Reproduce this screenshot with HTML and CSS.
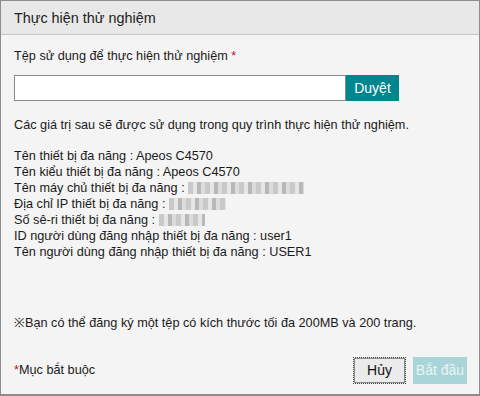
FILE: index.html
```html
<!DOCTYPE html>
<html lang="vi">
<head>
<meta charset="utf-8">
<link rel="stylesheet" href="styles.css">
</head>
<body>
<div class="dialog">
  <div class="header">Thực hiện thử nghiệm</div>
  <div class="content">
    <div class="label">Tệp sử dụng để thực hiện thử nghiệm <span class="req">*</span></div>
    <div class="file-row">
      <div class="file-input"></div>
      <button class="browse">Duyệt</button>
    </div>
    <p class="note">Các giá trị sau sẽ được sử dụng trong quy trình thực hiện thử nghiệm.</p>
    <div class="info">
      <div>Tên thiết bị đa năng : Apeos C4570</div>
      <div>Tên kiểu thiết bị đa năng : Apeos C4570</div>
      <div>Tên máy chủ thiết bị đa năng : <span class="blur b-host"></span></div>
      <div>Địa chỉ IP thiết bị đa năng : <span class="blur b-ip"></span></div>
      <div>Số sê-ri thiết bị đa năng : <span class="blur b-sn"></span></div>
      <div>ID người dùng đăng nhập thiết bị đa năng : user1</div>
      <div>Tên người dùng đăng nhập thiết bị đa năng : USER1</div>
    </div>
    <p class="limit">※Bạn có thể đăng ký một tệp có kích thước tối đa 200MB và 200 trang.</p>
  </div>
  <div class="footer">
    <div class="mandatory"><span class="req">*</span>Mục bắt buộc</div>
    <div class="actions">
      <button class="btn cancel">Hủy</button>
      <button class="btn start" disabled>Bắt đầu</button>
    </div>
  </div>
</div>
</body>
</html>
```
FILE: styles.css
```css
html, body {
  margin: 0;
  padding: 0;
  background: #f4f4f4;
}
body {
  font-family: "Liberation Sans", Arial, sans-serif;
  font-size: 12.7px;
  color: #1a1a1a;
}
.dialog {
  width: 480px;
  height: 396px;
  box-sizing: border-box;
  border: 1px solid #8c8c8c;
  border-bottom-width: 2px;
  background: #f4f4f4;
  display: flex;
  flex-direction: column;
}
.header {
  height: 33px;
  background: #e8e8e8;
  border-bottom: 1px solid #c6c6c6;
  padding-left: 13px;
  font-size: 14.4px;
  line-height: 34px;
  color: #222;
}
.content {
  padding: 13px 13px 0;
  flex: 1;
}
.label {
  line-height: 16px;
}
.req {
  color: #b8102e;
}
.file-row {
  display: flex;
  margin-top: 11px;
}
.file-input {
  width: 330px;
  height: 24px;
  border: 1px solid #8a8a8a;
  background: #fff;
}
.browse {
  width: 53px;
  height: 26px;
  border: 0;
  margin: 0;
  background: #00868d;
  color: #fff;
  font-family: inherit;
  font-size: 14px;
  padding: 0;
}
.note {
  margin: 16px 0 0;
  line-height: 16px;
}
.info {
  margin-top: 15px;
  line-height: 16px;
}
.blur {
  display: inline-block;
  height: 12px;
  vertical-align: -2px;
  background:
    repeating-linear-gradient(90deg, #c9c9c9 0 5px, #e6e6e6 5px 9px, #b8b8b8 9px 13px, #dcdcdc 13px 17px),
    #d8d8d8;
}
.b-host { width: 116px; }
.b-ip { width: 57px; }
.b-sn { width: 46px; }
.limit {
  margin: 55px 0 0;
  line-height: 16px;
}
.footer {
  display: flex;
  align-items: center;
  justify-content: space-between;
  padding: 0 12px 9px 13px;
  height: 30px;
}
.actions {
  display: flex;
  gap: 7px;
}
.btn {
  height: 27px;
  font-family: inherit;
  font-size: 14px;
  padding: 0;
  margin: 0;
}
.cancel {
  width: 53px;
  background: #ebebeb;
  border: 1px dotted #444;
  outline: 1px solid #8a8a8a;
  outline-offset: -2px;
  color: #111;
}
.start {
  width: 54px;
  background: #a9d5d9;
  border: 0;
  color: #e8f4f5;
}
```
